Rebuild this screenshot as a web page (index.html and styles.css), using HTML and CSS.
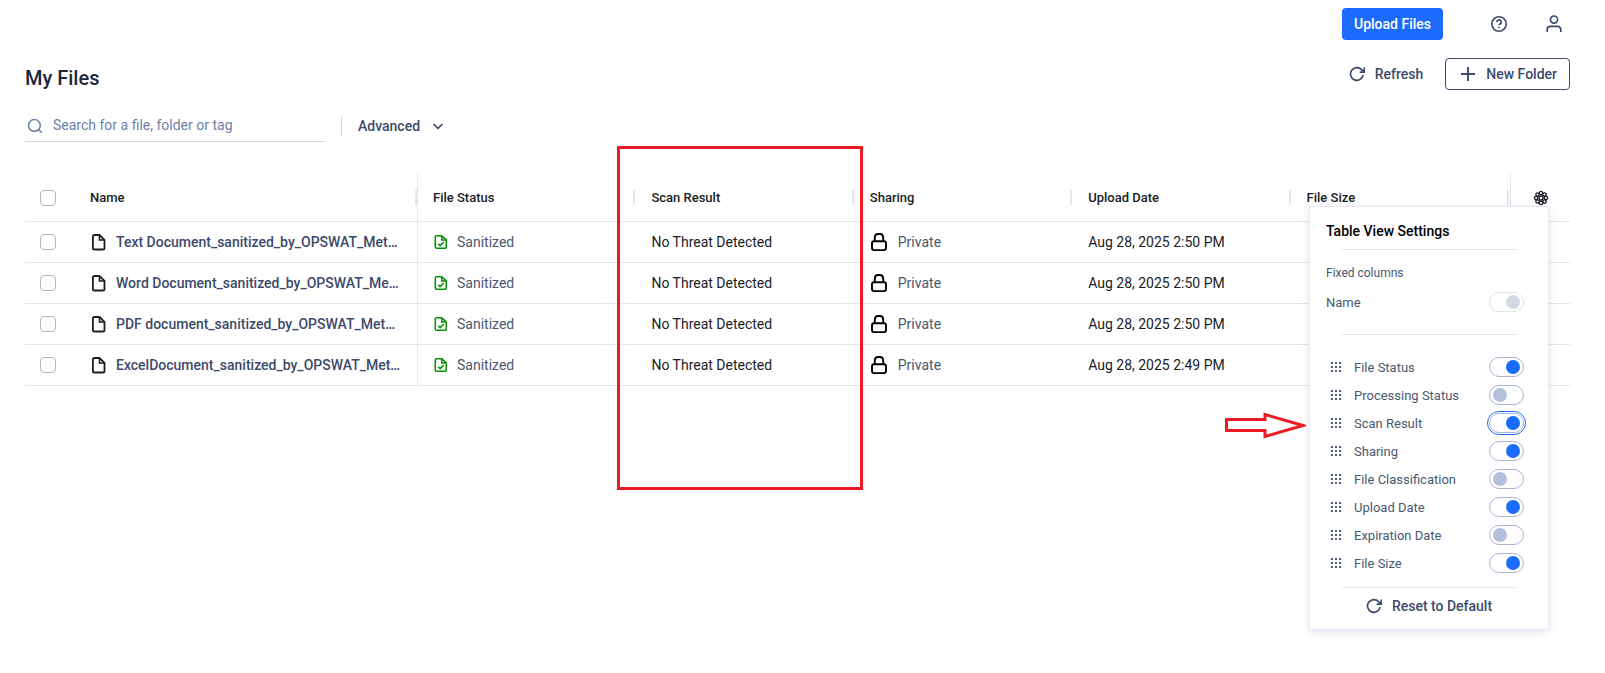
FILE: index.html
```html
<!DOCTYPE html>
<html lang="en">

<head>
    <meta charset="UTF-8">
    <meta name="viewport" content="width=device-width, initial-scale=1.0">
    <title>My Files</title>
    <link rel="stylesheet" href="styles.css">
</head>

<body>
    <svg class="sprite" aria-hidden="true">
        <symbol id="i-refresh" viewBox="0 0 16 16">
            <path d="M14.2 9.2A6.4 6.4 0 1 1 12.6 3.6L15 6M15.2 1.6V6.1H10.7" fill="none" stroke="currentColor" stroke-width="1.7" />
        </symbol>
        <symbol id="i-file" viewBox="0 0 16 18">
            <path d="M9.5 2H4.5A1.6 1.6 0 0 0 2.9 3.6V14.9A1.6 1.6 0 0 0 4.5 16.5H12.9A1.6 1.6 0 0 0 14.5 14.9V6.8Z" fill="none" stroke="currentColor" stroke-width="1.8" stroke-linejoin="round" />
            <path d="M9.5 2V7H14.3" fill="none" stroke="currentColor" stroke-width="1.6" />
        </symbol>
        <symbol id="i-check-file" viewBox="0 0 14 16">
            <path d="M8.8 1.8H3.6A1.3 1.3 0 0 0 2.3 3.1V12.9A1.3 1.3 0 0 0 3.6 14.2H12A1.3 1.3 0 0 0 13.3 12.9V5.8Z" fill="none" stroke="currentColor" stroke-width="1.6" stroke-linejoin="round" />
            <path d="M8.8 1.8V6H13.2M5.1 9.7L7.1 11.6L10.7 8.1" fill="none" stroke="currentColor" stroke-width="1.5" />
        </symbol>
        <symbol id="i-lock" viewBox="0 0 18 20">
            <path d="M4.6 9.4L4.9 5A3.2 3.2 0 0 1 8 2H10A3.2 3.2 0 0 1 13.1 5L13.4 9.4" fill="none" stroke="currentColor" stroke-width="1.9" />
            <rect x="2" y="9.3" width="14" height="8.8" rx="2" fill="none" stroke="currentColor" stroke-width="1.9" />
        </symbol>
        <symbol id="i-drag" viewBox="0 0 10 10">
            <path d="M0 0h2v2h-2zM4 0h2v2h-2zM8 0h2v2h-2zM0 4h2v2h-2zM4 4h2v2h-2zM8 4h2v2h-2zM0 8h2v2h-2zM4 8h2v2h-2zM8 8h2v2h-2z" fill="currentColor" />
        </symbol>
    </svg>

    <header class="top-bar">
        <button class="btn btn-primary" type="button">Upload Files</button>
        <button class="icon-btn" type="button" aria-label="Help">
            <svg width="18" height="18" viewBox="0 0 18 18" fill="none" stroke="currentColor" stroke-width="1.6">
                <circle cx="9" cy="9" r="7.2" />
                <path d="M6.8 7.2A2.2 2.2 0 1 1 9.9 9.1Q9 9.5 9 10.3" />
                <path d="M9 11.7V13.3" />
            </svg>
        </button>
        <button class="icon-btn" type="button" aria-label="Account">
            <svg width="18" height="18" viewBox="0 0 18 18" fill="none" stroke="currentColor" stroke-width="1.7">
                <circle cx="9" cy="4.6" r="3.6" />
                <path d="M2.2 17V14.4A3 3 0 0 1 5.2 11.4H12.8A3 3 0 0 1 15.8 14.4V17" />
            </svg>
        </button>
    </header>

    <main class="page">
        <div class="page-head">
            <h1>My Files</h1>
            <div class="actions">
                <button class="btn btn-text" type="button">
                    <svg width="16" height="16"><use href="#i-refresh" /></svg>
                    Refresh
                </button>
                <button class="btn btn-outline" type="button">
                    <svg width="16" height="16" viewBox="0 0 16 16"><path d="M8 1V15M1 8H15" stroke="currentColor" stroke-width="1.9" /></svg>
                    New Folder
                </button>
            </div>
        </div>

        <div class="toolbar">
            <label class="search">
                <svg width="16" height="16" viewBox="0 0 16 16" fill="none" stroke="currentColor" stroke-width="1.6">
                    <circle cx="7.4" cy="7.4" r="5.9" />
                    <path d="M11.4 11.4L14.8 14.8" />
                </svg>
                <input type="text" placeholder="Search for a file, folder or tag" aria-label="Search">
            </label>
            <button class="advanced" type="button">
                Advanced
                <svg width="12" height="12" viewBox="0 0 12 12"><path d="M1.5 4L6 8.4L10.5 4" fill="none" stroke="currentColor" stroke-width="1.7" /></svg>
            </button>
        </div>

        <div class="table-wrap">
            <table class="files">
                <colgroup>
                    <col class="col-check">
                    <col class="col-name">
                    <col><col><col><col><col>
                    <col class="col-settings">
                </colgroup>
                <thead>
                    <tr>
                        <th class="check"><input type="checkbox" aria-label="Select all"></th>
                        <th class="name">Name</th>
                        <th>File Status</th>
                        <th>Scan Result<div class="highlight"></div></th>
                        <th>Sharing</th>
                        <th>Upload Date</th>
                        <th>File Size</th>
                        <th class="settings">
                            <button class="gear" type="button" aria-label="Table view settings">
                                <svg width="16" height="16" viewBox="-8 -8 16 16" fill="none" stroke="currentColor" stroke-width="1.3">
                                    <circle r="2" />
                                    <circle cx="0" cy="-4.9" r="1.7" />
                                    <circle cx="3.5" cy="-3.5" r="1.7" />
                                    <circle cx="4.9" cy="0" r="1.7" />
                                    <circle cx="3.5" cy="3.5" r="1.7" />
                                    <circle cx="0" cy="4.9" r="1.7" />
                                    <circle cx="-3.5" cy="3.5" r="1.7" />
                                    <circle cx="-4.9" cy="0" r="1.7" />
                                    <circle cx="-3.5" cy="-3.5" r="1.7" />
                                </svg>
                            </button>
                        </th>
                    </tr>
                </thead>
                <tbody>
                    <tr>
                        <td class="check"><input type="checkbox" aria-label="Select file"></td>
                        <td class="name"><div class="cell"><svg width="16" height="18"><use href="#i-file" /></svg><span>Text Document_sanitized_by_OPSWAT_Met…</span></div></td>
                        <td><div class="cell status"><svg width="14" height="16"><use href="#i-check-file" /></svg><span>Sanitized</span></div></td>
                        <td>No Threat Detected</td>
                        <td><div class="cell sharing"><svg width="18" height="20"><use href="#i-lock" /></svg><span>Private</span></div></td>
                        <td>Aug 28, 2025 2:50 PM</td>
                        <td></td>
                        <td></td>
                    </tr>
                    <tr>
                        <td class="check"><input type="checkbox" aria-label="Select file"></td>
                        <td class="name"><div class="cell"><svg width="16" height="18"><use href="#i-file" /></svg><span>Word Document_sanitized_by_OPSWAT_Me…</span></div></td>
                        <td><div class="cell status"><svg width="14" height="16"><use href="#i-check-file" /></svg><span>Sanitized</span></div></td>
                        <td>No Threat Detected</td>
                        <td><div class="cell sharing"><svg width="18" height="20"><use href="#i-lock" /></svg><span>Private</span></div></td>
                        <td>Aug 28, 2025 2:50 PM</td>
                        <td></td>
                        <td></td>
                    </tr>
                    <tr>
                        <td class="check"><input type="checkbox" aria-label="Select file"></td>
                        <td class="name"><div class="cell"><svg width="16" height="18"><use href="#i-file" /></svg><span>PDF document_sanitized_by_OPSWAT_Met…</span></div></td>
                        <td><div class="cell status"><svg width="14" height="16"><use href="#i-check-file" /></svg><span>Sanitized</span></div></td>
                        <td>No Threat Detected</td>
                        <td><div class="cell sharing"><svg width="18" height="20"><use href="#i-lock" /></svg><span>Private</span></div></td>
                        <td>Aug 28, 2025 2:50 PM</td>
                        <td></td>
                        <td></td>
                    </tr>
                    <tr>
                        <td class="check"><input type="checkbox" aria-label="Select file"></td>
                        <td class="name"><div class="cell"><svg width="16" height="18"><use href="#i-file" /></svg><span>ExcelDocument_sanitized_by_OPSWAT_Met…</span></div></td>
                        <td><div class="cell status"><svg width="14" height="16"><use href="#i-check-file" /></svg><span>Sanitized</span></div></td>
                        <td>No Threat Detected</td>
                        <td><div class="cell sharing"><svg width="18" height="20"><use href="#i-lock" /></svg><span>Private</span></div></td>
                        <td>Aug 28, 2025 2:49 PM</td>
                        <td></td>
                        <td></td>
                    </tr>
                </tbody>
            </table>

            <section class="view-settings">
                <h2>Table View Settings</h2>
                <hr>
                <p class="group-title">Fixed columns</p>
                <div class="option">
                    <label for="c-name">Name</label>
                    <input class="switch" id="c-name" type="checkbox" checked disabled>
                </div>
                <hr class="wide">
                <div class="option">
                    <svg class="drag" width="10" height="10"><use href="#i-drag" /></svg>
                    <label for="c-status">File Status</label>
                    <input class="switch" id="c-status" type="checkbox" checked>
                </div>
                <div class="option">
                    <svg class="drag" width="10" height="10"><use href="#i-drag" /></svg>
                    <label for="c-processing">Processing Status</label>
                    <input class="switch" id="c-processing" type="checkbox">
                </div>
                <div class="option">
                    <svg class="drag" width="10" height="10"><use href="#i-drag" /></svg>
                    <label for="c-scan">Scan Result</label>
                    <input class="switch focused" id="c-scan" type="checkbox" checked>
                </div>
                <div class="option">
                    <svg class="drag" width="10" height="10"><use href="#i-drag" /></svg>
                    <label for="c-sharing">Sharing</label>
                    <input class="switch" id="c-sharing" type="checkbox" checked>
                </div>
                <div class="option">
                    <svg class="drag" width="10" height="10"><use href="#i-drag" /></svg>
                    <label for="c-class">File Classification</label>
                    <input class="switch" id="c-class" type="checkbox">
                </div>
                <div class="option">
                    <svg class="drag" width="10" height="10"><use href="#i-drag" /></svg>
                    <label for="c-upload">Upload Date</label>
                    <input class="switch" id="c-upload" type="checkbox" checked>
                </div>
                <div class="option">
                    <svg class="drag" width="10" height="10"><use href="#i-drag" /></svg>
                    <label for="c-expiration">Expiration Date</label>
                    <input class="switch" id="c-expiration" type="checkbox">
                </div>
                <div class="option">
                    <svg class="drag" width="10" height="10"><use href="#i-drag" /></svg>
                    <label for="c-size">File Size</label>
                    <input class="switch" id="c-size" type="checkbox" checked>
                </div>
                <hr class="last">
                <button class="btn btn-text reset" type="button">
                    <svg width="16" height="16"><use href="#i-refresh" /></svg>
                    Reset to Default
                </button>

                <svg class="arrow" width="82" height="28" viewBox="0 0 82 28">
                    <path d="M2.5 7.5H41V2.5L79 13.5L41 24.5V18.5H2.5Z" fill="none" stroke="#ed1c24" stroke-width="3" />
                </svg>
            </section>
        </div>
    </main>
</body>

</html>
```
FILE: styles.css
```css
:root {
    --ink: #1b273c;
    --slate: #3d4a6b;
    --muted: #4b5870;
    --line: #e6e6eb;
    --blue: #1d6bfc;
    --red: #ed1c24;
    font-family: Roboto, "Liberation Sans", sans-serif;
    font-size: 14px;
}

* {
    box-sizing: border-box;
}

body {
    margin: 0;
    min-height: 100vh;
    color: var(--ink);
    background-color: #fff;
}

svg {
    flex: none;
}

.sprite {
    position: absolute;
    width: 0;
    height: 0;
}

button,
input {
    font: inherit;
    color: inherit;
}

button {
    border: 0;
    padding: 0;
    background: none;
    cursor: pointer;
}

/* Top bar */
.top-bar {
    display: flex;
    justify-content: flex-end;
    align-items: center;
    gap: 23px;
    height: 48px;
    padding: 0 35px 0 25px;
}

.btn {
    display: flex;
    align-items: center;
    justify-content: center;
    gap: 10px;
    height: 32px;
    border-radius: 4px;
    font-weight: 500;
    color: var(--slate);
}

.btn-primary {
    margin-right: 17px;
    padding: 0 12px;
    color: #fff;
    background-color: var(--blue);
}

.btn-outline {
    padding: 0 12px 0 14px;
    border: 1px solid var(--slate);
}

.icon-btn {
    display: flex;
    align-items: center;
    justify-content: center;
    width: 32px;
    height: 32px;
    color: var(--slate);
}

/* Page */
.page {
    padding: 10px 35px 32px 25px;
}

.page-head {
    display: flex;
    justify-content: space-between;
    align-items: flex-start;
}

.page-head h1 {
    margin: 0;
    font-size: 20px;
    font-weight: 500;
    line-height: 40px;
}

.actions {
    display: flex;
    gap: 22px;
}

.toolbar {
    display: flex;
    align-items: center;
    gap: 16px;
    margin: 12px 0 32px;
}

.search {
    display: flex;
    align-items: center;
    gap: 10px;
    width: 300px;
    height: 32px;
    padding-left: 2px;
    border-bottom: 1px solid #d0d6e6;
    color: #7080a8;
}

.search input {
    flex: 1;
    min-width: 0;
    padding: 0 0 2px;
    border: 0;
    outline: 0;
    background: none;
}

.search input::placeholder {
    color: #7080a8;
    opacity: 1;
}

.advanced {
    display: flex;
    align-items: center;
    gap: 12px;
    height: 20px;
    padding-left: 16px;
    border-left: 1px solid #d0d6e6;
    font-weight: 500;
    color: var(--slate);
}

/* Files table */
.table-wrap {
    position: relative;
}

.files {
    width: 100%;
    table-layout: fixed;
    border-collapse: separate;
    border-spacing: 0;
}

.col-check {
    width: 50px;
}

.col-name {
    width: 343px;
}

.col-settings {
    width: 60px;
}

.files th,
.files td {
    padding: 0 15px;
    border-bottom: 1px solid var(--line);
    text-align: left;
    white-space: nowrap;
}

.files th {
    position: relative;
    height: 48px;
    font-size: 13px;
    font-weight: 500;
    color: #1a1d26;
}

/* resize handle */
.files th:not(.check):not(.settings)::after {
    content: "";
    position: absolute;
    top: 16px;
    right: 1px;
    width: 2px;
    height: 15px;
    background-color: var(--line);
}

.files th.name::after {
    margin-right: -1px;
}

.files td {
    height: 41px;
    color: #1a1d26;
}

.files .name {
    border-right: 1px solid var(--line);
}

.files .settings {
    border-left: 1px solid var(--line);
}

.check input {
    display: block;
    appearance: none;
    width: 16px;
    height: 16px;
    margin: 0;
    border: 1px solid #b4b5c5;
    border-radius: 4px;
}

.gear {
    display: flex;
    margin-left: 7px;
}

.cell {
    display: flex;
    align-items: center;
    gap: 10px;
}

td.name span {
    font-weight: 500;
    color: var(--slate);
}

.status {
    color: #0a8f0a;
}

.sharing {
    color: #000;
}

.status span,
.sharing span {
    color: var(--muted);
}

.highlight {
    position: absolute;
    top: -28px;
    left: -19px;
    right: -8px;
    z-index: 1;
    height: 344px;
    border: 3px solid var(--red);
    pointer-events: none;
}

/* Column settings menu */
.view-settings {
    position: absolute;
    top: 32px;
    right: 21px;
    z-index: 2;
    width: 240px;
    padding: 12px 24px 7px 16px;
    border: 1px solid #e8eaf3;
    background-color: #fff;
    box-shadow: 0 2px 8px rgba(60, 80, 140, 0.16);
}

.view-settings h2 {
    margin: 0;
    font-size: 14px;
    font-weight: 500;
    line-height: 24px;
    color: #000;
}

.view-settings hr {
    height: 1px;
    margin: 6px 8px 12px 16px;
    border: 0;
    background-color: var(--line);
}

.view-settings hr.wide {
    margin-top: 18px;
    margin-bottom: 18px;
}

.view-settings hr.last {
    margin-top: 10px;
    margin-bottom: 2px;
}

.group-title {
    margin: 0 0 4px;
    font-size: 12px;
    line-height: 22px;
    color: var(--muted);
}

.option {
    display: flex;
    align-items: center;
    height: 28px;
    font-size: 13px;
    color: var(--muted);
}

.option label {
    flex: 1;
}

.drag {
    margin: 0 13px 0 5px;
}

.switch {
    display: flex;
    align-items: center;
    appearance: none;
    width: 35px;
    height: 20px;
    margin: 0;
    padding: 0 3px;
    border: 1px solid #a9b6d6;
    border-radius: 10px;
}

.switch::before {
    content: "";
    width: 14px;
    height: 14px;
    border-radius: 50%;
    background-color: #b5c0dc;
}

.switch:checked {
    justify-content: flex-end;
}

.switch:checked::before {
    background-color: var(--blue);
}

.switch:disabled {
    border-color: #dfe3ed;
}

.switch:disabled::before {
    background-color: #d2d8e6;
}

.switch.focused {
    outline: 1px solid var(--blue);
    outline-offset: 1px;
}

.reset {
    width: 100%;
    padding-left: 8px;
}

.arrow {
    position: absolute;
    top: 205px;
    left: -86px;
}
```
